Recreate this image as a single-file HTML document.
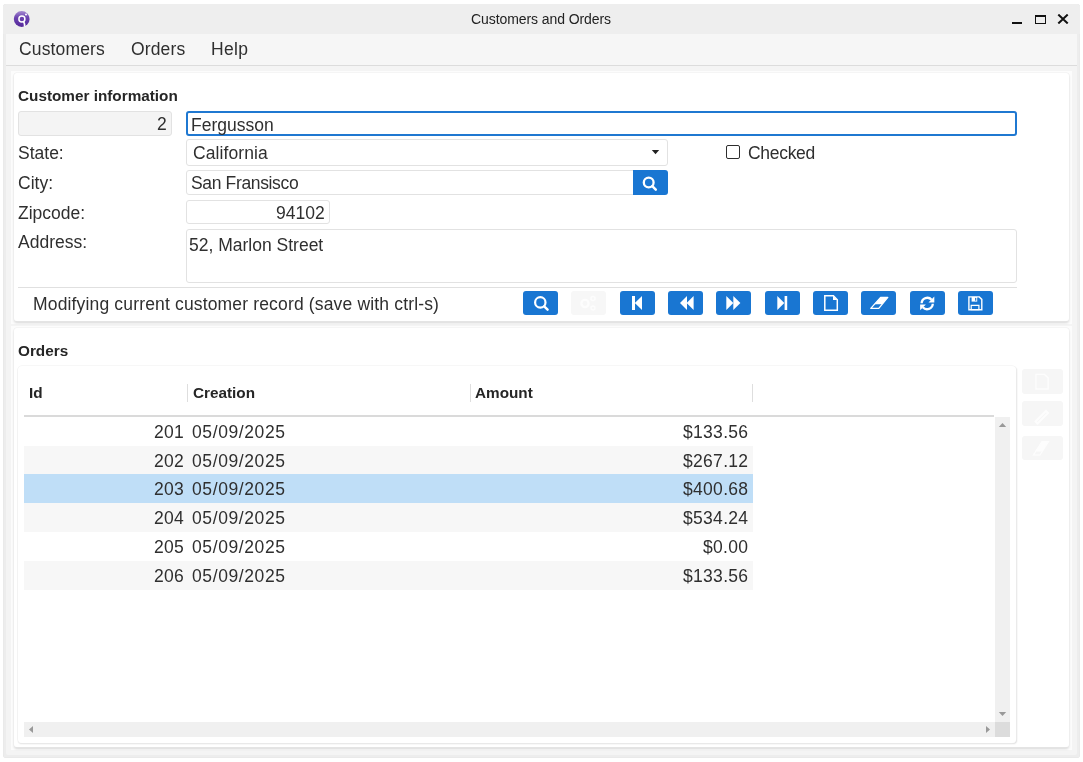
<!DOCTYPE html>
<html><head><meta charset="utf-8">
<style>
*{box-sizing:border-box;margin:0;padding:0}
html,body{width:1083px;height:762px;overflow:hidden;background:#fff;-webkit-font-smoothing:antialiased;font-family:"Liberation Sans",sans-serif;color:#2f2f2f}
.a{position:absolute}
.t{position:absolute;white-space:nowrap;line-height:1;will-change:transform}
#win{position:absolute;left:3px;top:4px;width:1077px;height:754px;background:#ededed;border-radius:3px;box-shadow:inset 0 0 0 .5px #e6e6e6;overflow:hidden}
#body{position:absolute;left:3px;top:62px;width:1071px;height:689px;background:#f4f4f4;border-radius:0 0 2px 2px}
#title{position:absolute;left:0;top:0;width:1077px;height:30px;background:#eeeeee;border-radius:3px 3px 0 0}
#menu{position:absolute;left:3px;top:30px;width:1071px;height:32px;background:#f6f6f6;border-bottom:1px solid #dcdcdc}
.panel{position:absolute;background:#fff;border-radius:3px;box-shadow:0 0 0 .6px #ededed,0 2px 2.5px rgba(0,0,0,.15)}
.fld{position:absolute;background:#fff;border:1px solid #e2e2e2;border-radius:3px}
.btn{position:absolute;width:35px;height:24px;background:#1976d2;border-radius:3px}
.lbl{font-size:17.5px;color:#2f2f2f}
.row{position:absolute;left:24px;width:729px}
.cell{position:absolute;will-change:transform;font-size:17.5px;white-space:nowrap;line-height:1;color:#2f2f2f}
.hd{position:absolute;will-change:transform;white-space:nowrap;line-height:1;font-size:15.3px;font-weight:bold;color:#262626}
</style></head><body>
<div id="win">
  <div id="title">
    <svg class="a" style="left:-3px;top:-4px" width="40" height="34" viewBox="0 0 40 34">
      <defs><linearGradient id="lg" x1="0" y1="0" x2="0" y2="1"><stop offset="0" stop-color="#a58ad0"/><stop offset=".4" stop-color="#6c44b0"/><stop offset="1" stop-color="#55289a"/></linearGradient></defs>
      <circle cx="21.7" cy="19" r="7.9" fill="url(#lg)"/>
      <circle cx="21.9" cy="18.9" r="3" fill="none" stroke="#fff" stroke-width="1.5"/>
      <path d="M23.6 21.5 Q24.8 23.5 24.6 26.8" fill="none" stroke="#fff" stroke-width="1.6"/>
      <circle cx="26" cy="14.4" r="1" fill="#fff"/>
    </svg>
    <div class="t" style="left:468px;top:8.3px;font-size:14px;color:#222;letter-spacing:-.08px">Customers and Orders</div>
    <div class="a" style="left:1009px;top:18px;width:10px;height:2px;background:#111"></div>
    <div class="a" style="left:1032px;top:11px;width:11px;height:9px;border:1.6px solid #111;border-top-width:2px"></div>
    <svg class="a" style="left:1054px;top:10px" width="12" height="10" viewBox="0 0 12 10"><path d="M1.3 0.6L10.7 9.4M10.7 0.6L1.3 9.4" stroke="#111" stroke-width="2.1"/></svg>
  </div>
  <div id="body"></div>
  <div id="menu">
    <div class="t lbl" style="left:13px;top:7px;letter-spacing:.15px">Customers</div>
    <div class="t lbl" style="left:124.5px;top:7px;letter-spacing:.15px">Orders</div>
    <div class="t lbl" style="left:205px;top:7px;letter-spacing:.3px">Help</div>
  </div>
</div>

<div class="a" style="left:11px;top:71px;width:1061px;height:253px;background:#fcfcfc"></div>
<div class="panel" style="left:14px;top:73px;width:1055px;height:248px"></div>
<div class="hd" style="left:18px;top:88px">Customer information</div>
<div class="fld" style="left:18px;top:111px;width:154px;height:25px;background:#f4f4f4;border-color:#e2e2e2"></div>
<div class="t lbl" style="right:916px;top:116px">2</div>
<div class="fld" style="left:186px;top:111px;width:831px;height:25px;border:2px solid #1f78d1"></div>
<div class="t lbl" style="left:191px;top:117px">Fergusson</div>

<div class="t lbl" style="left:18px;top:145px">State:</div>
<div class="fld" style="left:186px;top:139px;width:482px;height:27px"></div>
<div class="t lbl" style="left:193px;top:145px;letter-spacing:.1px">California</div>
<svg class="a" style="left:651px;top:150px" width="9" height="5"><path d="M0.8 0H8.2L4.5 4.3Z" fill="#222"/></svg>
<div class="a" style="left:726px;top:145px;width:14px;height:14px;border:1.6px solid #2e2e2e;border-radius:2px"></div>
<div class="t lbl" style="left:747.5px;top:145px;letter-spacing:-.3px">Checked</div>

<div class="t lbl" style="left:18px;top:175px">City:</div>
<div class="fld" style="left:186px;top:170px;width:450px;height:25px;border-radius:3px 0 0 3px"></div>
<div class="t lbl" style="left:191px;top:175px;letter-spacing:-.35px">San Fransisco</div>
<div class="a" style="left:633px;top:170px;width:35px;height:25px;background:#1976d2;border-radius:0 3px 3px 0"></div>
<svg class="a" style="left:641px;top:175px" width="18" height="18" viewBox="0 0 18 18"><circle cx="7.7" cy="7.5" r="4.9" fill="none" stroke="#fff" stroke-width="2.3"/><path d="M11.3 11.1L14.8 14.6" stroke="#fff" stroke-width="2.5" stroke-linecap="round"/></svg>

<div class="t lbl" style="left:18px;top:205px">Zipcode:</div>
<div class="fld" style="left:186px;top:200px;width:144px;height:24px"></div>
<div class="t lbl" style="left:276px;top:205px">94102</div>

<div class="t lbl" style="left:18px;top:234px">Address:</div>
<div class="fld" style="left:186px;top:229px;width:831px;height:54px"></div>
<div class="t lbl" style="left:189px;top:237px">52, Marlon Street</div>

<div class="a" style="left:18px;top:287px;width:999px;height:1px;background:#e0e0e0"></div>
<div class="t lbl" style="left:32.5px;top:296px;letter-spacing:.16px">Modifying current customer record (save with ctrl-s)</div>

<div class="btn" style="left:523px;top:291px"></div>
<div class="a" style="left:571px;top:291px;width:35px;height:24px;background:#f7f7f7;border-radius:3px"></div>
<div class="btn" style="left:620px;top:291px"></div>
<div class="btn" style="left:668px;top:291px"></div>
<div class="btn" style="left:716px;top:291px"></div>
<div class="btn" style="left:765px;top:291px"></div>
<div class="btn" style="left:813px;top:291px"></div>
<div class="btn" style="left:861px;top:291px"></div>
<div class="btn" style="left:910px;top:291px"></div>
<div class="btn" style="left:958px;top:291px"></div>


<div class="a" style="left:11px;top:326px;width:1061px;height:424px;background:#fcfcfc"></div>
<div class="panel" style="left:14px;top:328px;width:1055px;height:419px"></div>
<div class="hd" style="left:18px;top:343px">Orders</div>
<div class="a" style="left:18px;top:366px;width:998px;height:377px;background:#fff;border-radius:4px;box-shadow:0 0 0 .6px #f0f0f0,.5px 1px 1.5px rgba(0,0,0,.14)"></div>
<div class="hd" style="left:29px;top:385px">Id</div>
<div class="hd" style="left:193px;top:385px">Creation</div>
<div class="hd" style="left:475px;top:385px">Amount</div>
<div class="a" style="left:187px;top:384px;width:1px;height:18px;background:#dedede"></div>
<div class="a" style="left:470px;top:384px;width:1px;height:18px;background:#dedede"></div>
<div class="a" style="left:752px;top:384px;width:1px;height:18px;background:#dedede"></div>
<div class="a" style="left:24px;top:415px;width:970px;height:2px;background:#dadada"></div>

<div class="row" style="top:417px;height:29px;background:#ffffff"></div>
<div class="row" style="top:446px;height:28px;background:#f7f7f7"></div>
<div class="row" style="top:474px;height:29px;background:#bfdef7"></div>
<div class="row" style="top:503px;height:29px;background:#f7f7f7"></div>
<div class="row" style="top:532px;height:29px;background:#ffffff"></div>
<div class="row" style="top:561px;height:29px;background:#f7f7f7"></div>

<div class="cell" style="right:899px;top:424px;letter-spacing:.3px">201</div>
<div class="cell" style="left:192px;top:424px;letter-spacing:.6px">05/09/2025</div>
<div class="cell" style="right:335px;top:424px;letter-spacing:.3px">$133.56</div>
<div class="cell" style="right:899px;top:453px;letter-spacing:.3px">202</div>
<div class="cell" style="left:192px;top:453px;letter-spacing:.6px">05/09/2025</div>
<div class="cell" style="right:335px;top:453px;letter-spacing:.3px">$267.12</div>
<div class="cell" style="right:899px;top:481px;letter-spacing:.3px">203</div>
<div class="cell" style="left:192px;top:481px;letter-spacing:.6px">05/09/2025</div>
<div class="cell" style="right:335px;top:481px;letter-spacing:.3px">$400.68</div>
<div class="cell" style="right:899px;top:510px;letter-spacing:.3px">204</div>
<div class="cell" style="left:192px;top:510px;letter-spacing:.6px">05/09/2025</div>
<div class="cell" style="right:335px;top:510px;letter-spacing:.3px">$534.24</div>
<div class="cell" style="right:899px;top:539px;letter-spacing:.3px">205</div>
<div class="cell" style="left:192px;top:539px;letter-spacing:.6px">05/09/2025</div>
<div class="cell" style="right:335px;top:539px;letter-spacing:.3px">$0.00</div>
<div class="cell" style="right:899px;top:568px;letter-spacing:.3px">206</div>
<div class="cell" style="left:192px;top:568px;letter-spacing:.6px">05/09/2025</div>
<div class="cell" style="right:335px;top:568px;letter-spacing:.3px">$133.56</div>


<div class="a" style="left:995px;top:417px;width:15px;height:305px;background:#f0f0f0"></div>
<svg class="a" style="left:998px;top:422px" width="9" height="6"><path d="M0.8 5H8.2L4.5 1Z" fill="#999"/></svg>
<svg class="a" style="left:998px;top:711px" width="9" height="6"><path d="M0.8 1H8.2L4.5 5Z" fill="#999"/></svg>
<div class="a" style="left:24px;top:722px;width:971px;height:15px;background:#f0f0f0"></div>
<div class="a" style="left:995px;top:722px;width:15px;height:15px;background:#dcdcdc"></div>
<svg class="a" style="left:28px;top:725px" width="6" height="9"><path d="M5 1V8L1 4.5Z" fill="#999"/></svg>
<svg class="a" style="left:985px;top:725px" width="6" height="9"><path d="M1 1V8L5 4.5Z" fill="#999"/></svg>

<div class="a" style="left:1022px;top:369px;width:41px;height:25px;background:#f6f6f6;border-radius:3px"></div>
<div class="a" style="left:1022px;top:401px;width:41px;height:25px;background:#f6f6f6;border-radius:3px"></div>
<div class="a" style="left:1022px;top:436px;width:41px;height:24px;background:#f6f6f6;border-radius:3px"></div>
<svg class="a" style="left:0;top:0" width="1083" height="762" viewBox="0 0 1083 762">
 <path d="M1036 374.4H1044.5L1048.2 378.1V389H1036Z" fill="none" stroke="#fdfdfd" stroke-width="1.4"/>
 <path d="M1035.5 421.5L1046 411L1048 413L1037.5 423.5Z" fill="none" stroke="#fdfdfd" stroke-width="2"/>
 <path d="M1042 441.5H1048.5L1042.5 451.5H1035Z" fill="#fdfdfd"/>
 <path d="M1042 441.5H1048.5L1040 455H1033.5Z" fill="none" stroke="#fdfdfd" stroke-width="1.2"/>
</svg>

<svg class="a" style="left:0;top:0;pointer-events:none" width="1083" height="762" viewBox="0 0 1083 762">
<g fill="#fff" stroke="none">
 <!-- search -->
 <circle cx="540.3" cy="302.4" r="5.2" fill="none" stroke="#fff" stroke-width="2.2"/>
 <path d="M544.2 306.3L547.6 309.7" stroke="#fff" stroke-width="2.4" stroke-linecap="round"/>
 <!-- cogs disabled -->
 <g opacity="0.9">
 <circle cx="585" cy="303.5" r="3.6" fill="none" stroke="#fdfdfd" stroke-width="2.4"/>
 <circle cx="593" cy="298.5" r="2" fill="none" stroke="#fdfdfd" stroke-width="1.6"/>
 <circle cx="593" cy="308" r="2" fill="none" stroke="#fdfdfd" stroke-width="1.6"/>
 </g>
 <!-- first -->
 <rect x="632" y="296" width="3" height="14"/>
 <path d="M634.8 303L642 296V310Z"/>
 <!-- prev -->
 <path d="M680 303L687 296V310Z"/>
 <path d="M686.6 303L693.6 296V310Z"/>
 <!-- next -->
 <path d="M726.3 296L733.3 303L726.3 310Z"/>
 <path d="M733.3 296L740.4 303L733.3 310Z"/>
 <!-- last -->
 <path d="M777.3 296L784.3 303L777.3 310Z"/>
 <rect x="784.6" y="296" width="2.6" height="14"/>
 <!-- file -->
 <path d="M824.8 295.8H833.4L837.3 299.7V310.2H824.8Z" fill="none" stroke="#fff" stroke-width="1.5" stroke-linejoin="miter"/>
 <path d="M833 295.8L837.3 300.1H833Z"/>
 <!-- eraser -->
 <path d="M880.6 297.4H887.8L882.1 304.3H874.3Z"/>
 <path d="M880.6 297.4H887.8L878.8 308.4H870.8Z" fill="none" stroke="#fff" stroke-width="1.3" stroke-linejoin="round"/>
 <!-- refresh -->
 <path d="M921.6 303.2A5.7 5.7 0 0 1 931.6 299.8" fill="none" stroke="#fff" stroke-width="2.3"/>
 <path d="M934.3 296.6V302.4H928.5Z"/>
 <path d="M932.8 303.8A5.7 5.7 0 0 1 922.8 307.2" fill="none" stroke="#fff" stroke-width="2.3"/>
 <path d="M920.1 310.2V304.4H925.9Z"/>
 <!-- save -->
 <path d="M968.9 296.9H979.3L981.8 299.4V309.7H968.9Z" fill="none" stroke="#fff" stroke-width="1.4"/>
 <path d="M971.6 296.9H977.2V301.6H971.6Z"/>
 <rect x="975.1" y="297.9" width="1.2" height="2.8" fill="#1976d2"/>
 <path d="M971.2 305.3H978.9V309.7H971.2Z" fill="none" stroke="#fff" stroke-width="1.2"/>
</g>
</svg>

</body></html>
